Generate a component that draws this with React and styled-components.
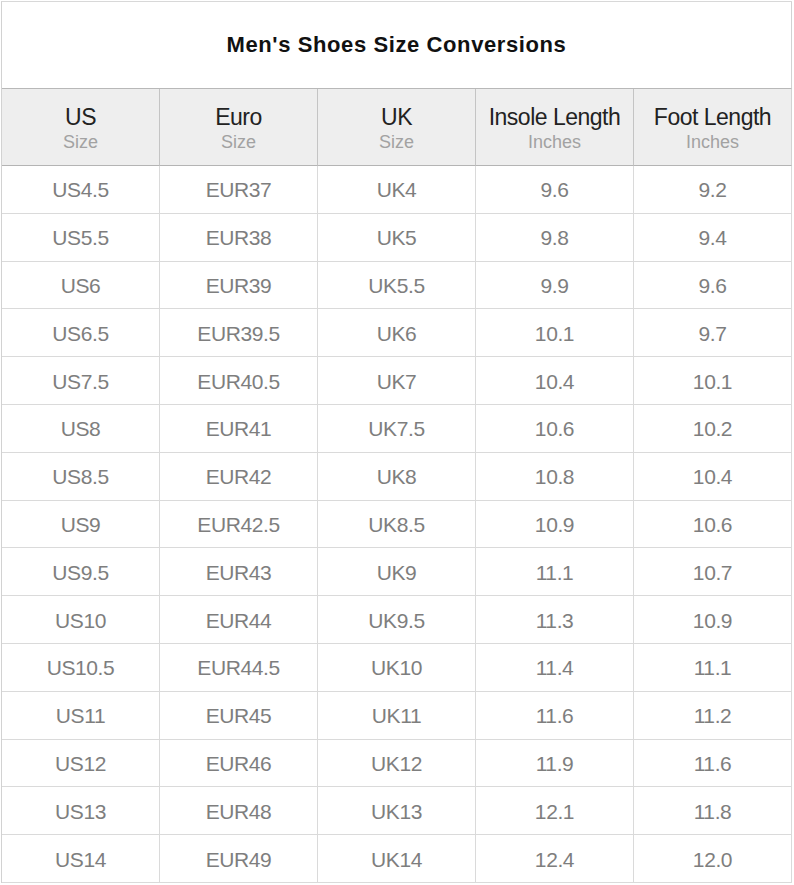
import React from "react";
import styled, { createGlobalStyle } from "styled-components";

const Global = createGlobalStyle`
  html, body { margin: 0; padding: 0; background: #ffffff; }
  body { font-family: "Liberation Sans", Arial, sans-serif; }
`;

const Table = styled.div`
  display: grid;
  grid-template-columns: repeat(5, 158px);
  margin: 1px 0 0 1px;
  width: max-content;
  border-left: 1px solid #d2d2d2;
  border-top: 1px solid #d8d8d8;
`;

const Title = styled.div`
  grid-column: 1 / span 5;
  height: 87px;
  box-sizing: border-box;
  border-right: 1px solid #d2d2d2;
  border-bottom: 1px solid #b8b8b8;
  display: flex;
  align-items: center;
  justify-content: center;
  padding-bottom: 1px;
  font-weight: 700;
  font-size: 22px;
  letter-spacing: 0.6px;
  color: #111111;
`;

const HeadCell = styled.div`
  height: 77px;
  box-sizing: border-box;
  background: #eeeeee;
  border-right: 1px solid ${(p) => (p.$last ? "#d2d2d2" : "#c4c4c4")};
  border-bottom: 1px solid #b4b4b4;
  display: flex;
  flex-direction: column;
  align-items: center;
  justify-content: center;
  padding-top: 2px;
`;

const HeadMain = styled.div`
  font-size: 23px;
  letter-spacing: -0.5px;
  color: #222222;
  line-height: 27px;
`;

const HeadSub = styled.div`
  font-size: 18px;
  color: #a2a2a2;
  line-height: 22px;
`;

const Cell = styled.div`
  height: 47.8px;
  box-sizing: border-box;
  border-right: 1px solid #dadada;
  border-bottom: 1px solid #dadada;
  display: flex;
  align-items: center;
  justify-content: center;
  font-size: 21px;
  letter-spacing: -0.4px;
  color: #7e7e7e;
  padding-top: 2px;
`;

const headers = [
  ["US", "Size"],
  ["Euro", "Size"],
  ["UK", "Size"],
  ["Insole Length", "Inches"],
  ["Foot Length", "Inches"],
];

const rows = [
  ["US4.5", "EUR37", "UK4", "9.6", "9.2"],
  ["US5.5", "EUR38", "UK5", "9.8", "9.4"],
  ["US6", "EUR39", "UK5.5", "9.9", "9.6"],
  ["US6.5", "EUR39.5", "UK6", "10.1", "9.7"],
  ["US7.5", "EUR40.5", "UK7", "10.4", "10.1"],
  ["US8", "EUR41", "UK7.5", "10.6", "10.2"],
  ["US8.5", "EUR42", "UK8", "10.8", "10.4"],
  ["US9", "EUR42.5", "UK8.5", "10.9", "10.6"],
  ["US9.5", "EUR43", "UK9", "11.1", "10.7"],
  ["US10", "EUR44", "UK9.5", "11.3", "10.9"],
  ["US10.5", "EUR44.5", "UK10", "11.4", "11.1"],
  ["US11", "EUR45", "UK11", "11.6", "11.2"],
  ["US12", "EUR46", "UK12", "11.9", "11.6"],
  ["US13", "EUR48", "UK13", "12.1", "11.8"],
  ["US14", "EUR49", "UK14", "12.4", "12.0"],
];

export default function App() {
  return (
    <>
      <Global />
      <Table>
        <Title>Men's Shoes Size Conversions</Title>
        {headers.map(([main, sub], i) => (
          <HeadCell key={main} $last={i === 4}>
            <HeadMain>{main}</HeadMain>
            <HeadSub>{sub}</HeadSub>
          </HeadCell>
        ))}
        {rows.map((r, ri) =>
          r.map((v, ci) => <Cell key={`${ri}-${ci}`}>{v}</Cell>)
        )}
      </Table>
    </>
  );
}
